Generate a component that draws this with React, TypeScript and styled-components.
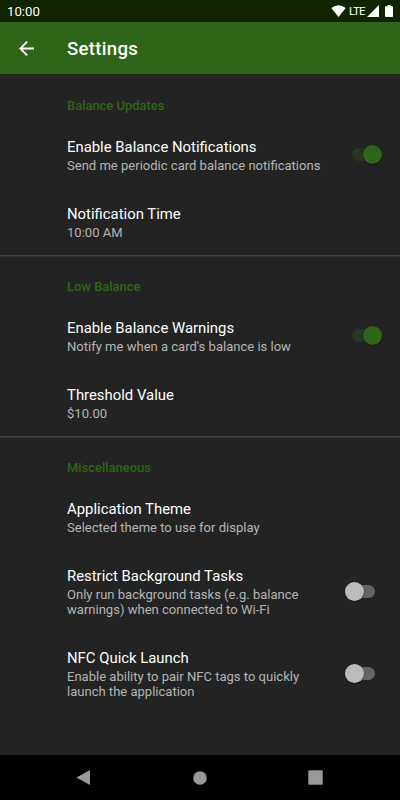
import React from "react";
import styled, { createGlobalStyle } from "styled-components";

const GlobalStyle = createGlobalStyle`
  * { box-sizing: border-box; }
  body { margin: 0; background: #232323; }
`;

const Screen = styled.div`
  width: 400px;
  height: 800px;
  display: flex;
  flex-direction: column;
  overflow: hidden;
  background: #232323;
  font-family: Roboto, sans-serif;
`;

const StatusBar = styled.div`
  height: 22px;
  flex: none;
  display: flex;
  align-items: center;
  justify-content: space-between;
  padding: 0 7px;
  background: #112400;
  color: #fff;
  font-size: 13.2px;
`;

const StatusIcons = styled.div`
  display: flex;
  align-items: center;
`;

const Lte = styled.span`
  width: 21px;
  padding-left: 3px;
  font-size: 11.5px;
  letter-spacing: -0.7px;
`;

const Signal = styled.svg`
  margin-right: 6px;
`;

const AppBar = styled.header`
  height: 52px;
  flex: none;
  display: flex;
  align-items: center;
  padding-left: 19px;
  gap: 33px;
  background: #2e6518;
  color: #fff;
`;

const Title = styled.h1`
  margin: 1px 0 0;
  font-size: 18.6px;
  font-weight: 500;
  letter-spacing: 0.3px;
`;

const Content = styled.main`
  flex: 1;
`;

const Section = styled.section<{ $divided?: boolean }>`
  height: 181px;
  padding: 25px 18px 0 67px;
  background: ${(p) =>
    p.$divided
      ? "linear-gradient(#404040 0 1px, #303030 1px 2px) 0 0 / 100% 2px no-repeat"
      : "none"};
`;

const SectionTitle = styled.h2`
  margin: 0 0 25px;
  height: 14px;
  font-size: 12.95px;
  line-height: 14px;
  font-weight: 500;
  color: #2e6518;
`;

const Row = styled.div<{ $height?: number }>`
  display: flex;
  justify-content: space-between;
  align-items: flex-start;
  height: ${(p) => p.$height ?? 67}px;
`;

const Label = styled.div`
  font-size: 14.88px;
  line-height: 18px;
  color: #fff;
  white-space: nowrap;
`;

const Summary = styled.div`
  margin-top: 2px;
  font-size: 13.04px;
  line-height: 15px;
  color: #b5b5b5;
  white-space: pre;
`;

const Toggle = styled.div<{ $on?: boolean; $top: number }>`
  flex: none;
  display: flex;
  align-items: center;
  justify-content: ${(p) => (p.$on ? "flex-end" : "flex-start")};
  width: 30px;
  height: 13px;
  margin-top: ${(p) => p.$top}px;
  margin-right: ${(p) => (p.$on ? 0 : 7)}px;
  border-radius: 7px;
  background: ${(p) => (p.$on ? "#26361f" : "#646464")};
`;

const Thumb = styled.span<{ $on?: boolean }>`
  width: 19px;
  height: 19px;
  flex: none;
  border-radius: 50%;
  background: ${(p) => (p.$on ? "#2e6518" : "#bbb")};
  box-shadow: 0 0.5px 1.5px rgba(0, 0, 0, 0.6);
`;

const NavBar = styled.nav`
  height: 45px;
  flex: none;
  display: flex;
  align-items: center;
  justify-content: space-between;
  padding: 0 77px 0 76px;
  background: #000;
`;

const HomeIcon = styled.svg`
  margin-left: 2px;
`;

type ItemProps = { label: string; summary: string; on?: boolean; height?: number; toggleTop?: number };

const Item = ({ label, summary, on, height, toggleTop = 10 }: ItemProps) => (
  <Row $height={height}>
    <div>
      <Label>{label}</Label>
      <Summary>{summary}</Summary>
    </div>
    {on !== undefined && (
      <Toggle $on={on} $top={toggleTop}>
        <Thumb $on={on} />
      </Toggle>
    )}
  </Row>
);

export default function App() {
  return (
    <Screen>
      <GlobalStyle />
      <StatusBar>
        <span>10:00</span>
        <StatusIcons>
          <svg width="15" height="12" viewBox="0 0 15 12"><path d="M7.5 12 0.3 3Q7.5-2.6 14.7 3Z" fill="#fff" /></svg>
          <Lte>LTE</Lte>
          <Signal width="12" height="12" viewBox="0 0 12 12"><path d="M12 0V12H0Z" fill="#fff" /></Signal>
          <svg width="8" height="12" viewBox="0 0 8 12"><path d="M2.5 0h3v1.2h1.7q.8 0 .8.8v9.2q0 .8-.8.8H.8q-.8 0-.8-.8V2q0-.8.8-.8h1.7Z" fill="#fff" /></svg>
        </StatusIcons>
      </StatusBar>
      <AppBar>
        <svg width="15" height="15" viewBox="4 4 16 16"><path d="M20 11H7.83l5.59-5.59L12 4l-8 8 8 8 1.41-1.41L7.83 13H20v-2z" fill="#fff" /></svg>
        <Title>Settings</Title>
      </AppBar>
      <Content>
        <Section>
          <SectionTitle>Balance Updates</SectionTitle>
          <Item label="Enable Balance Notifications" summary="Send me periodic card balance notifications" on />
          <Item label="Notification Time" summary="10:00 AM" />
        </Section>
        <Section $divided>
          <SectionTitle>Low Balance</SectionTitle>
          <Item label="Enable Balance Warnings" summary="Notify me when a card's balance is low" on />
          <Item label="Threshold Value" summary="$10.00" />
        </Section>
        <Section $divided>
          <SectionTitle>Miscellaneous</SectionTitle>
          <Item label="Application Theme" summary="Selected theme to use for display" />
          <Item label="Restrict Background Tasks" summary={"Only run background tasks (e.g. balance\nwarnings) when connected to Wi-Fi"} on={false} height={82.3} toggleTop={18} />
          <Item label="NFC Quick Launch" summary={"Enable ability to pair NFC tags to quickly\nlaunch the application"} on={false} toggleTop={18} />
        </Section>
      </Content>
      <NavBar>
        <svg width="14" height="15" viewBox="0 0 14 15"><path d="M14 0V15L0.5 7.5Z" fill="#999" /></svg>
        <HomeIcon width="14" height="14" viewBox="0 0 14 14"><circle cx="7" cy="7" r="6.8" fill="#999" /></HomeIcon>
        <svg width="15" height="15" viewBox="0 0 15 15"><rect x="0.3" y="0.3" width="14.4" height="14.4" rx="1" fill="#999" /></svg>
      </NavBar>
    </Screen>
  );
}
